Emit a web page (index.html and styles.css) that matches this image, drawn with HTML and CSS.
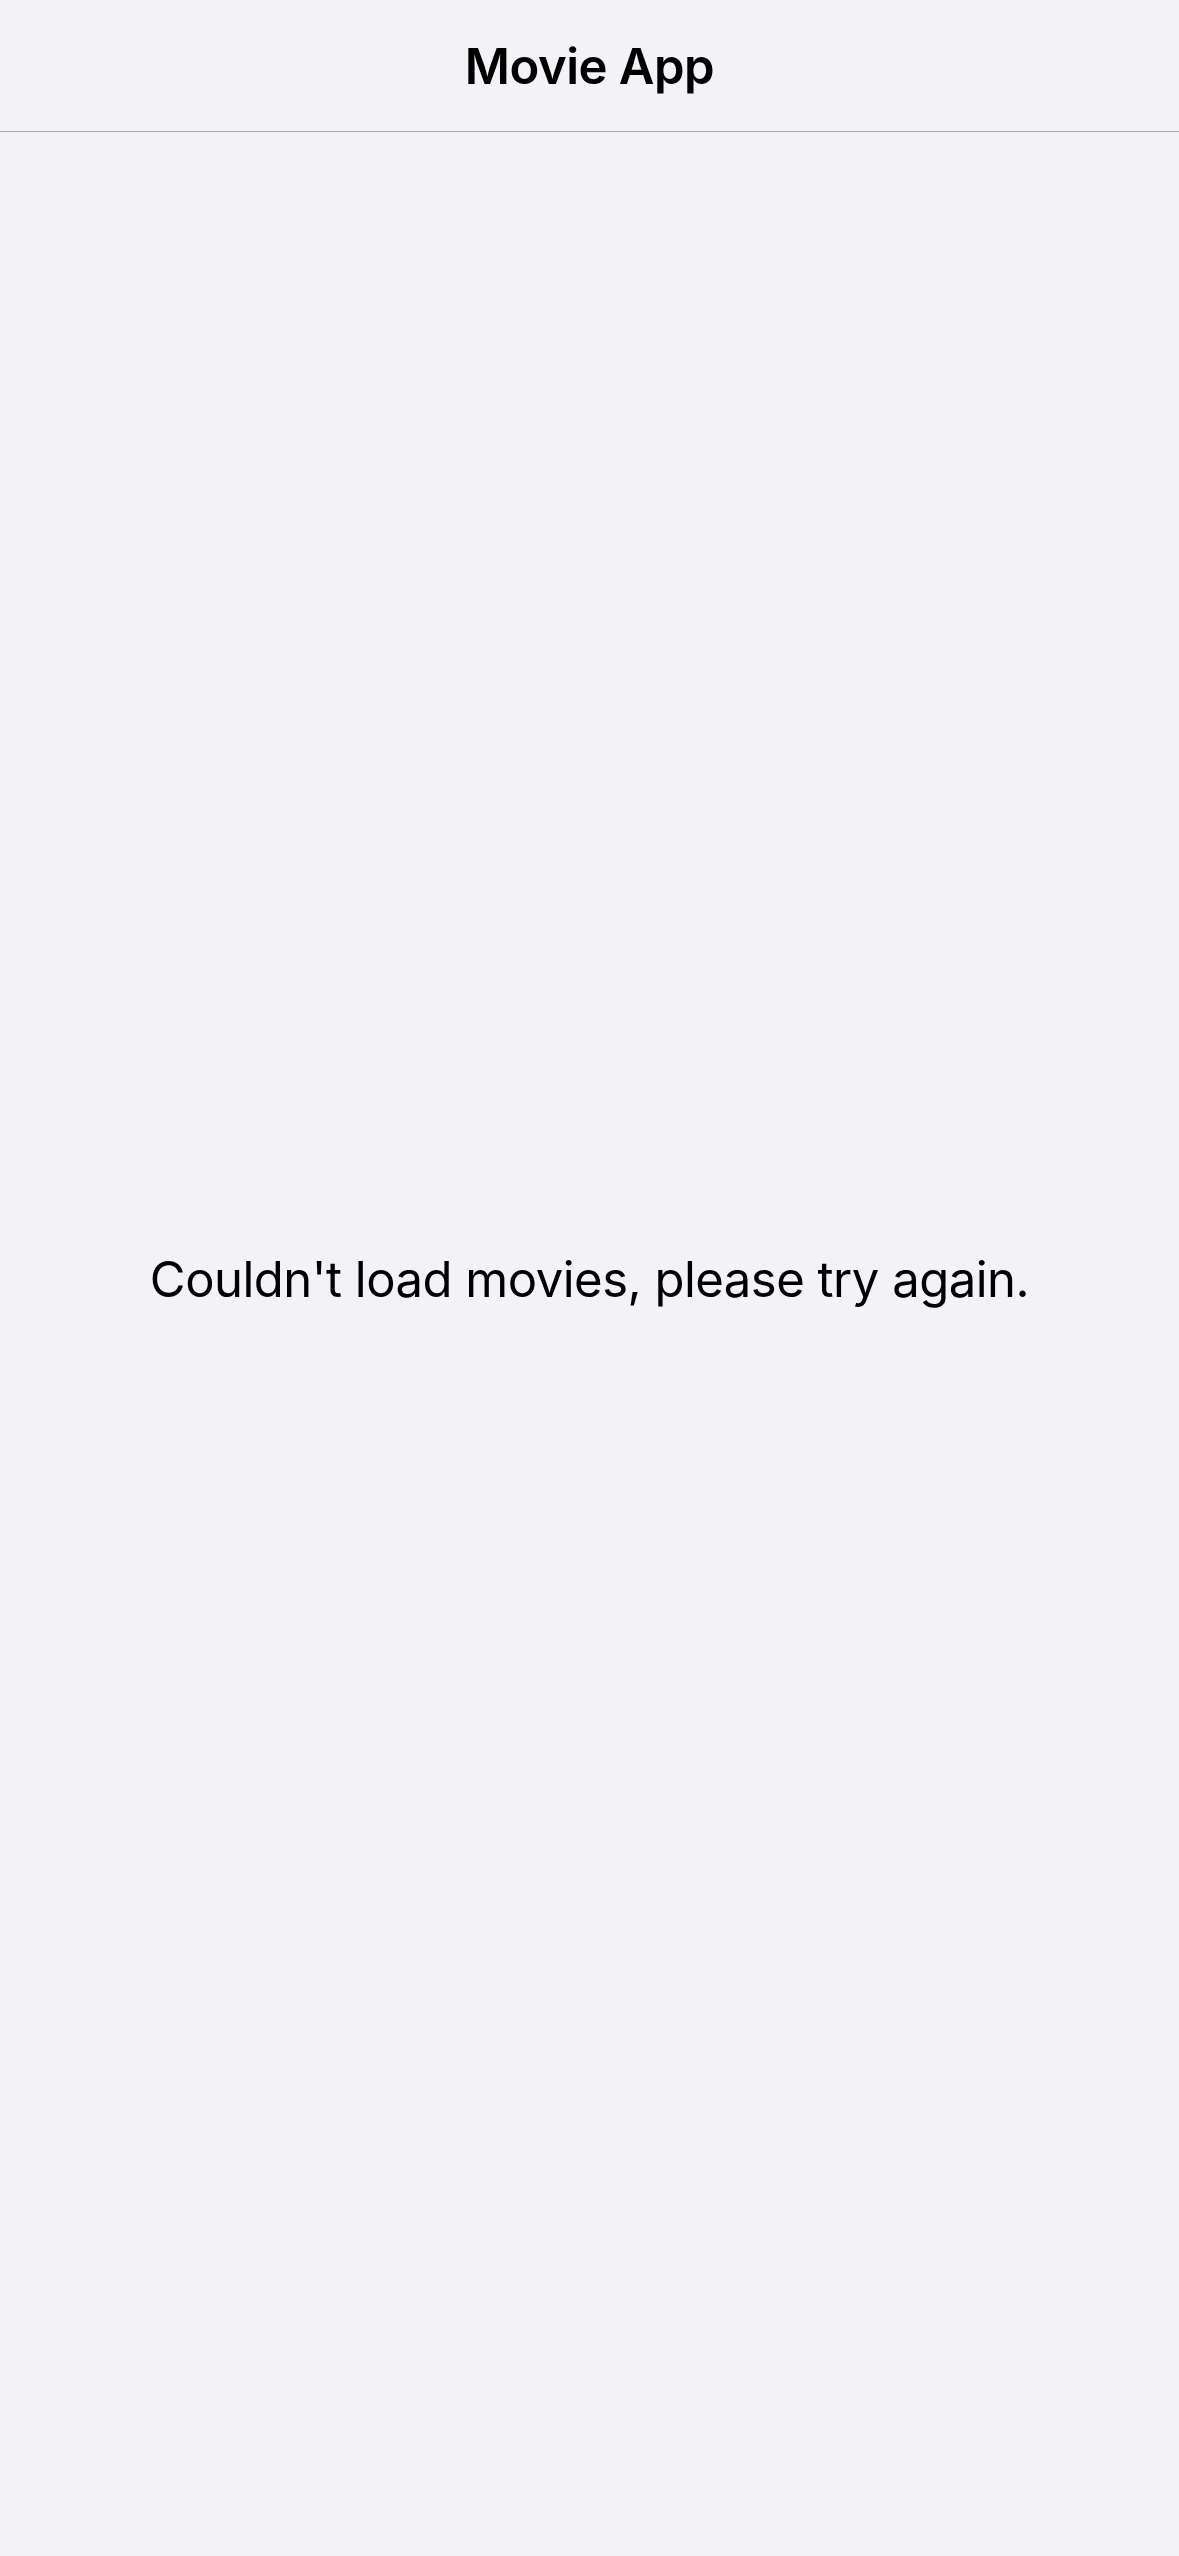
FILE: index.html
```html
<!DOCTYPE html>
<html lang="en">
<head>
<meta charset="utf-8">
<title>Movie App</title>
<link rel="stylesheet" href="styles.css">
</head>
<body>
<div class="app">
  <header class="navbar">
    <h1 class="navbar-title">Movie App</h1>
  </header>
  <main class="content">
    <p class="error-message">Couldn't load movies, please try again.</p>
  </main>
</div>
</body>
</html>
```

FILE: styles.css
```css
html, body {
  margin: 0;
  padding: 0;
  background: #f2f2f7;
}

body {
  font-family: Inter, "Noto Sans", "Liberation Sans", sans-serif;
  color: #000;
}

.app {
  display: flex;
  flex-direction: column;
  height: 2556px;
}

.navbar {
  height: 131px;
  border-bottom: 1px solid #a9a9ae;
  display: flex;
  justify-content: center;
  box-sizing: content-box;
}

.navbar-title {
  margin: 0;
  padding-top: 37px;
  font-size: 49px;
  line-height: 60px;
  font-weight: 600;
  letter-spacing: -0.5px;
}

.content {
  flex: 1;
  display: flex;
  justify-content: center;
  padding-top: 1117px;
}

.error-message {
  margin: 0;
  font-size: 49px;
  line-height: 61px;
  font-weight: 400;
  letter-spacing: -0.5px;
}
```
